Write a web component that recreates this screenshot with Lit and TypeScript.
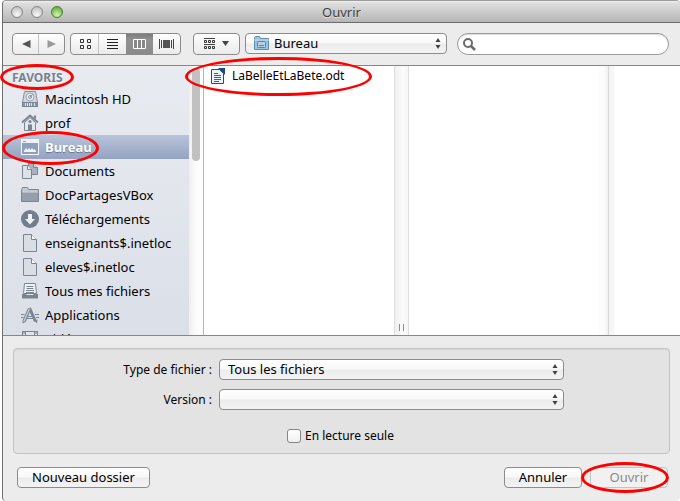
import { LitElement, html, css, svg, nothing } from "lit";
import { customElement, property, state } from "lit/decorators.js";
import { classMap } from "lit/directives/class-map.js";

const diskIcon = svg`
  <path d="M3.5 1.5h11l2 11v4h-15v-4z" fill="#d3d8df" stroke="#87909c"/>
  <rect x="1.5" y="12.5" width="15" height="4" fill="#8a94a1" stroke="#7b8592"/>
  <path d="M4.500 13v3M6.500 13v3M8.500 13v3M10.500 13v3M13.500 13v3" stroke="#dde2ea"/>
  <circle cx="9" cy="7" r="4" fill="#eceff4" stroke="#9aa3af"/>
  <circle cx="9" cy="7" r="1.5" fill="none" stroke="#8a94a1"/>
  <path d="M9 7l3-3" stroke="#8a94a1"/>`;
const homeIcon = svg`
  <path d="M1 8.5 9 1.500l8 7" fill="none" stroke="#7b8592" stroke-width="2"/>
  <path d="M13 1.500h2v4l-2-2z" fill="#7b8592"/>
  <path d="M3.500 8.500 9 3.500l5.500 5v8h-11z" fill="#e3e7ee" stroke="#7b8592"/>
  <rect x="7" y="10.500" width="4" height="6" fill="#7b8592"/>
  <circle cx="9" cy="7.500" r="1.500" fill="#7b8592"/>`;
const desktopIcon = svg`
  <rect x="0.500" y="1.500" width="17" height="15" fill="#8f9fbe" stroke="#f4f6fa"/>
  <path d="M1 2h16v3H1z" fill="#eef1f7"/>
  <path d="M2 3.500h3" stroke="#8f9fbe"/>
  <path d="M3 13.500h12" stroke="#f4f6fa"/>
  <path d="M3 13l2-3 1.500 2L8 10l1.500 2 1.500-2 1.500 2 1-1 1.500 2z" fill="#f4f6fa"/>`;
const docsIcon = svg`
  <path d="M7.500 1.500h5l4 4v7h-9z" fill="#aab2bd" stroke="#7b8592"/>
  <path d="M12.500 1v4.500h4" fill="#d3d8e0" stroke="#7b8592"/>
  <path d="M1.500 3.500h5l4 4v9h-9z" fill="#dde1e8" stroke="#7b8592"/>
  <path d="M6.500 3.500v4h4" fill="#f4f6f9" stroke="#7b8592"/>`;
const folderIcon = svg`
  <path d="M0.500 15.500v-12l1-2h5l1 2h10v12z" fill="#c3c9d2" stroke="#7b8592"/>
  <rect x="1" y="6" width="16" height="9" fill="#959eaa"/>
  <path d="M1 6.500h16" stroke="#b5bcc6"/>`;
const downloadIcon = svg`
  <circle cx="9" cy="9" r="9" fill="#737e8c"/>
  <path d="M7 4h4v5h3l-5 5.500-5-5.500h3z" fill="#eef1f6"/>`;
const fileIcon = svg`
  <path d="M2.500 0.500h8l5 5v12h-13z" fill="#d9dde4" stroke="#7b8592"/>
  <path d="M10.500 0.500v5h5" fill="#f5f7fa" stroke="#7b8592"/>`;
const trayIcon = svg`
  <path d="M3.500 1.500h11l1 10h-13z" fill="#eef1f5" stroke="#7b8592"/>
  <path d="M5.500 4.500h7M5.500 6.500h7M5 8.500h8M5 10.500h8" stroke="#7b8592"/>
  <path d="M1 12h4l1 1h6l1-1h4v4.500H1z" fill="#7b8592"/>`;
const appsIcon = svg`
  <path d="M9.500 2 3.500 16" stroke="#a4acb7" stroke-width="2.500"/>
  <path d="M8.500 2l6 13.500" stroke="#7b8592" stroke-width="3"/>
  <path d="M7.500 2 2 14.500v2.500l2-1.500L9.500 3" fill="#c7cdd6" stroke="#7b8592"/>
  <path d="M0 8.500h3.500M0 11.500h2.500M6.500 10.500h5M14 8.500h4M15 11.500h3M6 12.500h6" stroke="#7b8592"/>
  <path d="M13.500 14.500l2.500 3 .5-4" fill="#7b8592"/>`;
const filmIcon = svg`
  <rect x="1.500" y="1.500" width="15" height="15" fill="#dfe3ea" stroke="#7b8592"/>
  <path d="M4.500 1v16M13.500 1v16M5 8.500h8" stroke="#7b8592"/>
  <path d="M3 2v14M15 2v14" stroke="#7b8592" stroke-dasharray="2 1"/>`;

const PLACES = [
  { name: "Macintosh HD", icon: diskIcon },
  { name: "prof", icon: homeIcon },
  { name: "Bureau", icon: desktopIcon },
  { name: "Documents", icon: docsIcon },
  { name: "DocPartagesVBox", icon: folderIcon },
  { name: "Téléchargements", icon: downloadIcon },
  { name: "enseignants$.inetloc", icon: fileIcon },
  { name: "eleves$.inetloc", icon: fileIcon },
  { name: "Tous mes fichiers", icon: trayIcon },
  { name: "Applications", icon: appsIcon },
  { name: "Vidéos", icon: filmIcon },
];

@customElement("popup-select")
class PopupSelect extends LitElement {
  @property() value = "";
  @property() label = "";
  @property({ type: Boolean }) folder = false;

  static styles = css`
    :host { display: block; position: relative; min-width: 0; }
    select {
      appearance: none; display: block; box-sizing: border-box; width: 100%; height: 21px;
      margin: 0; padding: 0 24px 0 8px; border: 1px solid #8c8c8c; border-radius: 4px;
      background: linear-gradient(#ffffff, #f8f8f8 48%, #ececec 52%, #f3f3f3);
      font: 13px/19px "Noto Sans", sans-serif; color: #000;
    }
    select.with-icon { padding-left: 28px; }
    svg { position: absolute; top: 0; pointer-events: none; }
    .arrows { right: 5px; }
    .folder { left: 8px; top: 2px; }
  `;

  render() {
    return html`
      <select class=${classMap({ "with-icon": this.folder })} aria-label=${this.label}>
        <option>${this.value}</option>
      </select>
      ${this.folder
        ? html`<svg class="folder" width="17" height="16" viewBox="0 0 17 16">
            <path d="M1.500 14.500v-12l1-1h4l1 2h8v11z" fill="#9cc3dc" stroke="#5d8fae" />
            <path d="M1 5h15" stroke="#c4dfee" />
            <rect x="4.500" y="6.500" width="8" height="6" rx="1" fill="#b4d3e6" stroke="#5385a6" />
            <path d="M6 10.500h5" stroke="#5385a6" />
          </svg>`
        : nothing}
      <svg class="arrows" width="8" height="21" viewBox="0 0 8 21">
        <path d="M4 5l2.500 4h-5zM4 16l2.500-4h-5z" fill="#404040" />
      </svg>`;
  }
}

@customElement("app-root")
class AppRoot extends LitElement {
  @state() private selected = "Bureau";

  static styles = css`
    :host { display: block; background: #fff; font: 13px/20px "Noto Sans", sans-serif; color: #000; }
    * { box-sizing: border-box; }
    button { font: inherit; color: inherit; margin: 0; padding: 0; }
    svg { display: block; flex: none; }
    .window {
      position: relative; display: flex; flex-direction: column; height: 100vh; margin-left: 2px;
      border-left: 1px solid #6e6e6e; border-top: 1px solid #9c9c9c;
      border-radius: 4px; background: #ececec;
    }
    .titlebar {
      display: grid; grid-template-columns: 80px 1fr 80px; align-items: center; height: 22px; flex: none;
      border-bottom: 1px solid #6b6b6b; border-radius: 4px 4px 0 0;
      background: linear-gradient(#f2f2f2, #dedede 10%, #b6b6b6);
    }
    .lights { display: flex; gap: 8px; padding-left: 8px; }
    .light {
      width: 12px; height: 12px; border: 1px solid #858585; border-radius: 50%;
      background: radial-gradient(circle at 50% 80%, #fafafa, #c4c4c4 80%);
    }
    .light.zoom { border-color: #4b7b35; background: radial-gradient(circle at 50% 80%, #d3f7b4, #69b345 80%); }
    h1 { margin: 0; font-size: 13px; font-weight: 400; text-align: center; color: #3c3c3c; text-shadow: 0 1px #e4e4e4; }
    .toolbar {
      display: flex; align-items: flex-start; height: 43px; flex: none; padding: 10px 11px 0 9px;
      border-bottom: 1px solid #878787;
    }
    .group {
      display: flex; height: 22px; border: 1px solid #8c8c8c; border-radius: 4px; overflow: hidden;
      background: linear-gradient(#fff, #f4f4f4 50%, #ebebeb);
    }
    .group button { display: grid; place-items: center; flex: 1; border: 0; background: none; }
    .nav { width: 53px; margin-right: 5px; }
    .views { width: 111px; margin-right: 12px; }
    .group .line { border-left: 1px solid #c2c2c2; }
    .group .pressed { background: linear-gradient(#7c7c7c, #929292 30%, #8a8a8a); }
    .arrange { width: 47px; margin-right: 5px; }
    .path { flex: 202 1 0; margin-right: 10px; }
    .search { position: relative; flex: 212 1 0; min-width: 0; }
    .search input {
      display: block; width: 100%; height: 22px; padding: 0 10px 0 24px; border: 1px solid #9a9a9a;
      border-radius: 11px; background: #fff; font: inherit; outline: 0;
      box-shadow: inset 0 1px 1px #dcdcdc;
    }
    .search svg { position: absolute; left: 5px; top: 4px; }
    .browser { display: flex; flex: 1; min-height: 0; overflow: hidden; border-bottom: 1px solid #878787; background: #fff; }
    .sidebar { width: 186px; flex: none; overflow: hidden; background: linear-gradient(#e8ebf0, #dbdfe8); }
    h2 { margin: 0; padding: 2px 0 0 9px; height: 21px; font-size: 12px; line-height: 20px; font-weight: 700; color: #76818f; text-shadow: 0 1px #fff; }
    ul { list-style: none; margin: 0; padding: 0; }
    .place {
      display: flex; align-items: center; gap: 6px; height: 24px; padding-left: 18px;
      font-size: 13px; color: #000; text-decoration: none; white-space: nowrap;
    }
    .place.on {
      background: linear-gradient(#b9c4da, #94a3c2); color: #fff; font-weight: 700;
      text-shadow: 0 1px 1px #66748f;
    }
    .track { width: 15px; flex: none; border-right: 1px solid #b6b6b6; background: linear-gradient(90deg, #eee, #fafafa 40%, #fff); padding: 2px 3px; }
    .thumb { width: 8px; height: 93px; border-radius: 4px; background: #c1c1c1; }
    .files { flex: 190 1 0; min-width: 0; }
    .file { display: flex; align-items: center; gap: 6px; height: 20px; padding-left: 6px; font-size: 12px; color: #000; text-decoration: none; white-space: nowrap; }
    .divider {
      display: flex; align-items: flex-end; justify-content: center; width: 15px; flex: none;
      border: solid #dedede; border-width: 0 1px; background: linear-gradient(90deg, #efefef, #fcfcfc 60%, #f6f6f6);
    }
    .grip { width: 5px; height: 7px; margin-bottom: 4px; border: solid #8c8c8c; border-width: 0 1px; }
    .column { flex: 200 1 0; background: linear-gradient(270deg, #f0f0f0, #fcfcfc 4px, #fcfcfc 9px, #fff 10px); }
    .last { flex: 71 1 0; border-left: 1px solid #d9d9d9; background: linear-gradient(90deg, #f3f3f3, #f8f8f8 5px, #fff 6px); }
    .accessory { flex: none; padding: 12px 10px 13px; }
    .panel {
      padding: 10px 105px 10px 9px; height: 106px; border: 1px solid #c4c4c4; border-radius: 4px; background: #e3e3e3;
      box-shadow: inset 0 1px 1px #d4d4d4;
    }
    .fields { display: grid; grid-template-columns: 189px 1fr; column-gap: 7px; row-gap: 9px; }
    .caption { font-size: 12px; line-height: 21px; text-align: right; white-space: nowrap; }
    .check { display: flex; align-items: center; gap: 4px; width: max-content; margin: 17px 0 0 264px; font-size: 12px; line-height: 18px; }
    .check input {
      appearance: none; width: 14px; height: 14px; margin: 0; border: 1px solid #858585; border-radius: 3px;
      background: linear-gradient(#fff, #f0f0f0);
    }
    .actions { display: flex; gap: 8px; margin-top: 13px; padding: 0 2px 0 4px; }
    .push {
      height: 21px; width: 78px; border: 1px solid #8c8c8c; border-radius: 4px; line-height: 19px;
      background: linear-gradient(#fff, #f8f8f8 48%, #ececec 52%, #f3f3f3);
    }
    .push.wide { width: 133px; margin-right: auto; }
    .push:disabled { color: #8a8a8a; border-color: #c4c4c4; background: #f1f1f1; }
    .ring { position: absolute; border: 3px solid #ff0000; border-radius: 50%; pointer-events: none; }
    .ring.heading { left: -3px; top: 63px; width: 74px; height: 26px; }
    .ring.place-ring { left: -1px; top: 130px; width: 97px; height: 34px; }
    .ring.file-ring { left: 182px; top: 56px; width: 187px; height: 39px; }
    .ring.open-ring { right: 11px; bottom: 8px; width: 88px; height: 31px; }
  `;

  private choose(event: Event, name: string) {
    event.preventDefault();
    this.selected = name;
  }

  render() {
    return html`
      <main class="window">
        <header class="titlebar">
          <div class="lights">
            <button class="light" aria-label="Fermer"></button>
            <button class="light" aria-label="Réduire"></button>
            <button class="light zoom" aria-label="Agrandir"></button>
          </div>
          <h1>Ouvrir</h1>
        </header>
        <div class="toolbar">
          <div class="group nav">
            <button aria-label="Précédent"><svg width="10" height="10"><path d="M9.500 1v8L1 5z" fill="#555" /></svg></button>
            <button class="line" aria-label="Suivant"><svg width="10" height="10"><path d="M.500 1v8L9 5z" fill="#999" /></svg></button>
          </div>
          <div class="group views">
            <button aria-label="Icônes">
              <svg width="12" height="12" fill="none" stroke="#333">
                <path d="M1.500 1.500h3v3h-3zM8.500 1.500h3v3h-3zM1.500 7.500h3v3h-3zM8.500 7.500h3v3h-3z" />
              </svg>
            </button>
            <button class="line" aria-label="Liste">
              <svg width="11" height="12" stroke="#222"><path d="M0 1.500h11M0 4.500h11M0 7.500h11M0 10.500h11" /></svg>
            </button>
            <button class="pressed" aria-label="Colonnes">
              <svg width="15" height="12" fill="#888" stroke="#fff">
                <path d="M1.500 1.500h12v9h-12zM5.500 1.500v9M9.500 1.500v9" />
              </svg>
            </button>
            <button aria-label="Cover Flow">
              <svg width="15" height="11">
                <path d="M.500 0v10M2.500 1v8M12.500 1v8M14.500 0v10" stroke="#444" />
                <rect x="4" y="1" width="7" height="8" fill="#555" />
              </svg>
            </button>
          </div>
          <div class="group arrange">
            <button aria-label="Disposition">
              <svg width="28" height="12">
                <path d="M1 .500h11M1 6.500h11" stroke="#444" />
                <path d="M1.500 2.500h2v2h-2zM5.500 2.500h2v2h-2zM9.500 2.500h2v2h-2zM1.500 8.500h2v2h-2zM5.500 8.500h2v2h-2zM9.500 8.500h2v2h-2z" fill="none" stroke="#333" />
                <path d="M19 3h7l-3.500 5z" fill="#444" />
              </svg>
            </button>
          </div>
          <popup-select class="path" folder label="Dossier" value="Bureau"></popup-select>
          <div class="search">
            <input type="search" aria-label="Rechercher" />
            <svg width="14" height="14" fill="none" stroke="#6a6a6a">
              <circle cx="6" cy="6" r="4" stroke-width="2" /><path d="M9 9l4 4" stroke-width="2.500" />
            </svg>
          </div>
        </div>
        <div class="browser">
          <nav class="sidebar">
            <h2>FAVORIS</h2>
            <ul>
              ${PLACES.map(
                (p) => html`<li>
                  <a href="#" class=${classMap({ place: true, on: p.name === this.selected })}
                    @click=${(e: Event) => this.choose(e, p.name)}>
                    <svg width="18" height="18" viewBox="0 0 18 18">${p.icon}</svg>${p.name}
                  </a>
                </li>`
              )}
            </ul>
          </nav>
          <div class="track"><div class="thumb"></div></div>
          <div class="files">
            <a class="file" href="#">
              <svg width="16" height="18" viewBox="0 0 16 18">
                <path d="M1.500 2.500h8l4 4v10h-12z" fill="#eef5fa" stroke="#1c4f7c" />
                <path d="M8 1h7v7l-2.500-2.500L10 3z" fill="#1c4f7c" />
                <path d="M4 6.500h4M4 8.500h7M4 10.500h7M4 12.500h7M4 14.500h5" stroke="#2c6597" />
              </svg>LaBelleEtLaBete.odt
            </a>
          </div>
          <div class="divider"><div class="grip"></div></div>
          <div class="column"></div>
          <div class="last"></div>
        </div>
        <footer class="accessory">
          <div class="panel">
            <div class="fields">
              <span class="caption">Type de fichier :</span>
              <popup-select label="Type de fichier" value="Tous les fichiers"></popup-select>
              <span class="caption">Version :</span>
              <popup-select label="Version"></popup-select>
            </div>
            <label class="check"><input type="checkbox" />En lecture seule</label>
          </div>
          <div class="actions">
            <button class="push wide">Nouveau dossier</button>
            <button class="push">Annuler</button>
            <button class="push" disabled>Ouvrir</button>
          </div>
        </footer>
        <div class="ring heading"></div>
        <div class="ring place-ring"></div>
        <div class="ring file-ring"></div>
        <div class="ring open-ring"></div>
      </main>`;
  }
}
